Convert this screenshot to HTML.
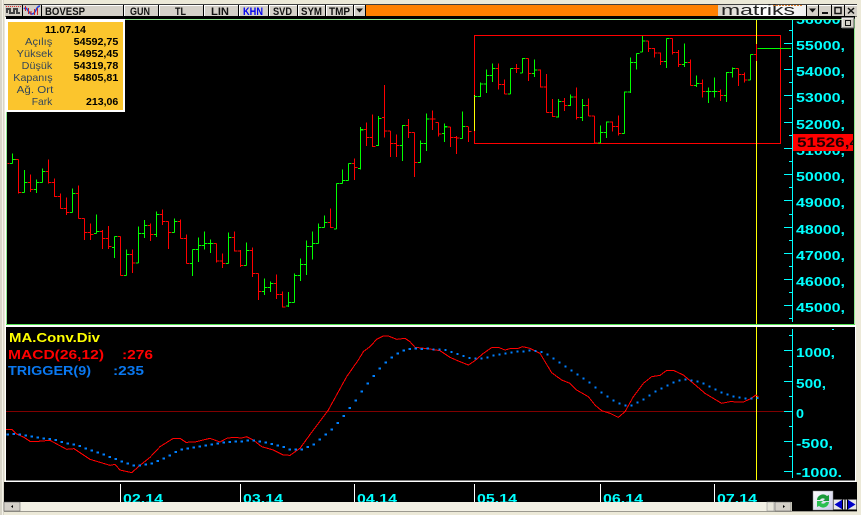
<!DOCTYPE html>
<html><head><meta charset="utf-8"><style>
html,body{margin:0;padding:0;background:#ece9d8;width:861px;height:515px;overflow:hidden}
svg{display:block;position:absolute;left:0;top:0}
text{font-family:"Liberation Sans",sans-serif}
.ax{font:bold 13px "Liberation Sans",sans-serif;fill:#0ff}
.tb{font:bold 11px "Liberation Sans",sans-serif;fill:#111}
.lb{font:10.5px "Liberation Sans",sans-serif;fill:#34465a}
.vl{font:bold 10.5px "Liberation Sans",sans-serif;fill:#000}
.mc{font:bold 13px "Liberation Sans",sans-serif}
</style></head><body>
<svg width="861" height="515" viewBox="0 0 861 515" xmlns="http://www.w3.org/2000/svg">
<defs><clipPath id="top"><rect x="0" y="20" width="861" height="304"/></clipPath>
<clipPath id="rl"><rect x="793" y="134" width="60" height="17"/></clipPath>
<linearGradient id="mg" x1="0" x2="1" y1="0" y2="0"><stop offset="0" stop-color="#d4d0c8"/><stop offset=".5" stop-color="#fff"/><stop offset="1" stop-color="#f0f0f0"/></linearGradient>
<linearGradient id="rg" x1="0" x2="1" y1="0" y2="1"><stop offset="0" stop-color="#fff"/><stop offset="1" stop-color="#c8c8e8"/></linearGradient></defs>
<!-- frame -->
<rect width="861" height="515" fill="#ece9d8"/>
<rect x="0" y="0" width="4" height="515" fill="#d8d5c8"/>
<rect x="2" y="0" width="1" height="515" fill="#f4f2e8"/>
<rect x="4" y="4" width="853" height="1" fill="#404040"/>
<rect x="5" y="16" width="850" height="310" fill="#000"/>
<rect x="5" y="5" width="1" height="321" fill="#fff"/>
<rect x="6" y="19" width="849" height="306" fill="#8fe88f"/>
<rect x="7" y="20" width="847" height="304" fill="#000"/>
<rect x="6" y="324" width="849" height="1" fill="#50e050"/>
<rect x="5" y="325" width="851" height="157" fill="#fff"/>
<rect x="6" y="327" width="849" height="153.500" fill="#000"/>
<rect x="4" y="482" width="853" height="20" fill="#000"/>
<rect x="792" y="502" width="65" height="9" fill="#000"/>
<!-- main axis -->
<g clip-path="url(#top)">
<text class="ax" x="796" y="24" textLength="49" lengthAdjust="spacingAndGlyphs">56000,</text>
<text class="ax" x="796" y="50" textLength="49" lengthAdjust="spacingAndGlyphs">55000,</text>
<text class="ax" x="796" y="76" textLength="49" lengthAdjust="spacingAndGlyphs">54000,</text>
<text class="ax" x="796" y="102" textLength="49" lengthAdjust="spacingAndGlyphs">53000,</text>
<text class="ax" x="796" y="129" textLength="49" lengthAdjust="spacingAndGlyphs">52000,</text>
<text class="ax" x="796" y="155" textLength="49" lengthAdjust="spacingAndGlyphs">51000,</text>
<text class="ax" x="796" y="181" textLength="49" lengthAdjust="spacingAndGlyphs">50000,</text>
<text class="ax" x="796" y="207" textLength="49" lengthAdjust="spacingAndGlyphs">49000,</text>
<text class="ax" x="796" y="234" textLength="49" lengthAdjust="spacingAndGlyphs">48000,</text>
<text class="ax" x="796" y="260" textLength="49" lengthAdjust="spacingAndGlyphs">47000,</text>
<text class="ax" x="796" y="286" textLength="49" lengthAdjust="spacingAndGlyphs">46000,</text>
<text class="ax" x="796" y="312" textLength="49" lengthAdjust="spacingAndGlyphs">45000,</text>
</g>
<path shape-rendering="crispEdges" stroke="#0ff" stroke-width="1" fill="none" d="M792.500 20V322M784 43.500h8M784 69.500h8M784 95.500h8M784 122.500h8M784 148.500h8M784 174.500h8M784 200.500h8M784 227.500h8M784 253.500h8M784 279.500h8M784 305.500h8M789 30.500h3M789 56.500h3M789 82.500h3M789 108.500h3M789 135.500h3M789 161.500h3M789 187.500h3M789 214.500h3M789 240.500h3M789 266.500h3M789 292.500h3M789 318.500h3"/>
<!-- range rect -->
<rect x="474.500" y="35.500" width="306" height="108" fill="none" stroke="#f00" stroke-width="1" shape-rendering="crispEdges"/>
<path d="M474.500 95V131" stroke="#ff0" stroke-width="1" shape-rendering="crispEdges"/>
<path d="M756.500 20V324" stroke="#ff0" stroke-width="1" shape-rendering="crispEdges"/>
<!-- bars part 1 -->
<g transform="translate(.17,120.17) scale(.33333)" fill="none" stroke-width="3.200" shape-rendering="crispEdges">
<path stroke="#f00" d="M22 130h6M55 118V220M46 118h9M55 217h9M91 163V215M84 187h7M91 208h9M145 118V190M138 154h7M145 187h9M163 175V230M156 187h7M163 229h9M181 220V265M174 229h7M181 265h9M199 232V285M192 265h7M199 277h9M235 196V295M228 220h7M235 295h9M253 295V360M246 295h7M253 337h9M271 310V360M264 337h7M271 343h9M307 330V387M300 334h7M307 355h9M325 318V387M318 355h7M325 379h9M361 349V466M354 349h7M361 466h9M397 388V459M390 403h7M397 429h9M451 310V363M444 316h7M451 343h9M487 268V315M480 283h7M487 304h9M505 304V387M498 304h7M505 337h9M541 298V355M534 304h7M541 355h9M559 343V430M552 355h7M559 430h9M649 370V427M642 370h7M649 422h9M667 400V443M660 422h7M667 430h9M703 334V394M696 352h7M703 392h9M721 390V440M714 392h7M721 436h9M757 382V470M750 391h7M757 460h9M775 460V539M768 460h7M775 514h9M829 463V536M822 490h7M829 523h9M847 514V562M840 523h7M847 561h9M991 265V323M984 307h7M991 322h9M1063 115V180M1056 130h7M1063 142h9"/>
<path stroke="#0f0" d="M37 100V130M30 130h7M37 118h9M73 150V217M66 217h7M73 187h9M109 178V218M102 208h7M109 187h9M127 145V187M120 187h7M127 154h9M217 205V277M210 277h7M217 220h9M289 283V340M282 340h7M289 334h9M343 349V414M336 382h7M343 349h9M379 388V466M372 466h7M379 403h9M415 319V429M408 429h7M415 340h9M433 300V354M426 340h7M433 316h9M469 274V350M462 343h7M469 283h9M523 295V337M516 337h7M523 304h9M577 388V467M570 430h7M577 388h9M595 352V425M588 388h7M595 376h9M613 334V388M606 376h7M613 370h9M631 358V398M624 370h7M631 370h9M685 337V430M678 430h7M685 352h9M739 367V436M732 436h7M739 391h9M793 475V524M786 514h7M793 502h9M811 484V515M804 502h7M811 490h9M865 516V560M858 558h7M865 547h9M883 460V547M876 547h7M883 466h9M901 415V482M894 466h7M901 433h9M919 361V464M912 433h7M919 379h9M937 334V418M930 379h7M937 370h9M955 310V370M948 370h7M955 322h9M973 286V322M966 322h7M973 307h9M1009 190V326M1002 326h7M1009 190h9M1027 148V190M1020 190h7M1027 181h9M1045 130V181M1038 181h7M1045 130h9M1081 22V148M1074 145h7M1081 28h9"/>
</g>
<!-- bars part 2 -->
<g transform="translate(360.17,75.17) scale(.33333)" fill="none" stroke-width="3.200" shape-rendering="crispEdges">
<path stroke="#f00" d="M19 142V212M12 163h7M19 187h9M37 118V215M30 187h7M37 214h9M73 30V187M66 127h7M73 168h9M91 168V245M84 168h7M91 205h9M109 178V245M102 205h7M109 211h9M145 132V188M138 151h7M145 172h9M163 172V305M156 172h7M163 262h9M217 106V164M210 132h7M217 132h9M235 142V184M226 142h9M235 177h9"/>
<path stroke="#0f0" d="M1 155V282M1 165h9M55 123V212M48 211h7M55 130h9M127 150V257M120 211h7M127 151h9M181 196V262M174 262h7M181 205h9M199 115V227M192 205h7M199 132h9M253 145V200M246 175h7M253 154h9"/>
</g>
<!-- bars part 3 -->
<g transform="translate(430.17,.17) scale(.33333)" fill="none" stroke-width="3.200" shape-rendering="crispEdges">
<path stroke="#f00" d="M61 380V440M54 380h7M61 412h9M79 408V462M72 412h7M79 414h9M115 380V425M108 379h7M115 394h9M205 190V268M198 205h7M205 253h9M223 238V282M216 253h7M223 281h9M259 192V218M252 205h7M259 205h9M295 175V243M288 175h7M295 220h9M331 208V262M324 210h7M331 260h9M349 222V337M342 260h7M349 337h9M367 297V350M360 337h7M367 349h9M403 293V333M396 304h7M403 316h9M439 262V358M432 290h7M439 352h9M475 295V347M468 316h7M475 347h9M493 347V428M486 347h7M493 428h9M547 364V394M540 365h7M547 379h9M565 346V406M558 379h7M565 400h9M655 122V155M648 122h7M655 145h9M673 143V172M666 145h7M673 158h9M691 157V195M684 158h7M691 184h9M727 115V163M720 115h7M727 157h9M745 150V200M738 157h7M745 193h9M781 178V256M774 187h7M781 256h9M817 238V292M810 250h7M817 274h9M871 268V303M864 274h7M871 286h9M925 205V257M918 205h7M925 223h9M943 217V247M936 223h7M943 240h9M979 132V183M972 163h7"/>
<path stroke="#0f0" d="M43 370V425M36 400h7M43 380h9M97 334V415M90 415h7M97 379h9M133 289h9M151 247V290M144 289h7M151 252h9M169 208V278M162 252h7M169 226h9M187 190V245M180 226h7M187 205h9M241 205V281M234 281h7M241 205h9M277 173V218M270 218h7M277 175h9M313 178V230M306 220h7M313 210h9M385 297V352M378 350h7M385 304h9M421 283V318M414 316h7M421 290h9M457 297V362M450 352h7M457 316h9M511 376V428M504 428h7M511 397h9M529 364V414M522 397h7M529 365h9M583 274V400M576 400h7M583 276h9M601 172V278M594 276h7M601 187h9M619 160V208M612 187h7M619 160h9M637 108V155M630 155h7M637 122h9M709 115V203M702 184h7M709 115h9M763 130V200M756 193h7M763 187h9M799 226V260M792 256h7M799 250h9M835 262V308M828 274h7M835 274h9M853 232V292M846 274h7M853 274h9M889 216V305M882 286h7M889 217h9M907 202V232M900 217h7M907 205h9M961 163V239M954 239h7M961 163h9M982 145H1082"/>
</g>
<!-- red price -->
<rect x="793" y="134" width="60" height="17" fill="#f00"/>
<g clip-path="url(#rl)"><text x="797" y="147" class="ax" style="fill:#200000;font-size:14px" textLength="62" lengthAdjust="spacingAndGlyphs">51526,4</text></g>
<!-- lower panel -->
<path d="M6 411.500H792" stroke="#800000" stroke-width="1" shape-rendering="crispEdges"/>
<path d="M756.500 327V480" stroke="#ff0" stroke-width="1" shape-rendering="crispEdges"/>
<path shape-rendering="crispEdges" stroke="#0ff" stroke-width="1" fill="none" d="M792.500 329V478M784 350.500h8M784 381.500h8M784 411.500h8M784 441.500h8M784 471.500h8M789 335.500h3M789 366.500h3M789 396.500h3M789 426.500h3M789 456.500h3M832 329.500h2"/>
<text class="ax" x="796" y="357" textLength="39" lengthAdjust="spacingAndGlyphs">1000,</text>
<text class="ax" x="796" y="388" textLength="30" lengthAdjust="spacingAndGlyphs">500,</text>
<text class="ax" x="796" y="418" textLength="8" lengthAdjust="spacingAndGlyphs">0</text>
<text class="ax" x="796" y="448" textLength="37" lengthAdjust="spacingAndGlyphs">-500,</text>
<text class="ax" x="796" y="477" textLength="46" lengthAdjust="spacingAndGlyphs">-1000.</text>
<text class="mc" x="9" y="342" textLength="91" lengthAdjust="spacingAndGlyphs" fill="#ff0">MA.Conv.Div</text>
<text class="mc" x="8" y="359" textLength="96" lengthAdjust="spacingAndGlyphs" fill="#f00">MACD(26,12)</text>
<text class="mc" x="122" y="359" textLength="31" lengthAdjust="spacingAndGlyphs" fill="#f00">:276</text>
<text class="mc" x="8" y="375" textLength="83" lengthAdjust="spacingAndGlyphs" fill="#0a78f0">TRIGGER(9)</text>
<text class="mc" x="113" y="375" textLength="31" lengthAdjust="spacingAndGlyphs" fill="#0a78f0">:235</text>
<g transform="translate(0,320) scale(.33333)" fill="none" shape-rendering="crispEdges">
<path stroke="#f00" stroke-width="3" d="M18 328L36 328L50 342L72 352L90 364L115 364L150 361L170 372L200 388L222 386L240 398L270 418L310 430L330 436L345 433L360 450L395 458L420 436L450 412L480 380L520 355L540 355L558 367L585 366L630 355L660 366L680 355L700 352L725 354L740 350L760 360L785 380L820 390L850 405L870 406L900 385L940 330L985 270L1040 170L1075 120L1090 95L1110 80L1130 58L1150 48L1165 48L1190 58L1215 55L1230 65L1245 82L1290 87"/>
<path stroke="#0080ff" stroke-width="6.300" d="M20 343h6.300M38 342h6.300M56 344h6.300M74 347h6.300M92 349h6.300M110 352h6.300M128 355h6.300M146 357h6.300M164 360h6.300M182 366h6.300M200 371h6.300M218 374h6.300M236 378h6.300M254 385h6.300M272 392h6.300M290 398h6.300M308 404h6.300M326 411h6.300M344 417h6.300M362 424h6.300M380 430h6.300M398 436h6.300M416 437h6.300M434 434h6.300M452 430h6.300M470 423h6.300M488 416h6.300M506 406h6.300M524 396h6.300M542 388h6.300M560 385h6.300M578 383h6.300M596 380h6.300M614 377h6.300M632 374h6.300M650 370h6.300M668 368h6.300M686 366h6.300M704 365h6.300M722 364h6.300M740 361h6.300M758 361h6.300M776 365h6.300M794 368h6.300M812 372h6.300M830 376h6.300M848 381h6.300M866 388h6.300M884 389h6.300M902 388h6.300M920 381h6.300M938 373h6.300M956 359h6.300M974 343h6.300M992 328h6.300M1010 309h6.300M1028 288h6.300M1046 264h6.300M1064 241h6.300M1082 214h6.300M1100 190h6.300M1118 168h6.300M1136 146h6.300M1154 127h6.300M1172 113h6.300M1190 100h6.300M1208 91h6.300M1226 87h6.300M1244 85h6.300M1262 87h6.300M1280 86h6.300"/>
</g>
<g transform="translate(430,320) scale(.33333)" fill="none" shape-rendering="crispEdges">
<path stroke="#f00" stroke-width="3" d="M0 87L30 92L60 112L85 123L115 135L135 122L160 100L185 83L205 82L225 90L240 86L262 86L278 80L300 85L330 100L345 125L365 158L395 180L420 190L440 210L475 230L495 255L515 272L540 280L565 292L585 275L610 230L640 190L665 170L690 166L710 151L730 151L760 165L790 190L825 220L850 235L875 250L900 245L940 246L960 237L978 225L985 230"/>
<path stroke="#0080ff" stroke-width="6.300" d="M7 88h6.300M25 89h6.300M43 90h6.300M61 96h6.300M79 102h6.300M97 108h6.300M115 114h6.300M133 115h6.300M151 115h6.300M169 112h6.300M187 106h6.300M205 103h6.300M223 100h6.300M241 97h6.300M259 95h6.300M277 94h6.300M295 92h6.300M313 93h6.300M331 96h6.300M349 103h6.300M367 115h6.300M385 127h6.300M403 139h6.300M421 151h6.300M439 163h6.300M457 175h6.300M475 187h6.300M493 202h6.300M511 217h6.300M529 229h6.300M547 241h6.300M565 250h6.300M583 256h6.300M601 256h6.300M619 248h6.300M637 239h6.300M655 226h6.300M673 214h6.300M691 205h6.300M709 196h6.300M727 187h6.300M745 181h6.300M763 179h6.300M781 182h6.300M799 185h6.300M817 190h6.300M835 199h6.300M853 208h6.300M871 217h6.300M889 223h6.300M907 229h6.300M925 232h6.300M943 235h6.300M961 236h6.300M979 234h6.300"/>
</g>
<!-- date axis -->
<path shape-rendering="crispEdges" stroke="#fff" stroke-width="1" d="M120.500 484V502M240.500 484V502M354.500 484V502M474.500 484V502M600.500 484V502M714.500 484V502"/>
<text class="ax" x="123" y="503" textLength="40" lengthAdjust="spacingAndGlyphs">02.14</text>
<text class="ax" x="243" y="503" textLength="40" lengthAdjust="spacingAndGlyphs">03.14</text>
<text class="ax" x="357" y="503" textLength="40" lengthAdjust="spacingAndGlyphs">04.14</text>
<text class="ax" x="477" y="503" textLength="40" lengthAdjust="spacingAndGlyphs">05.14</text>
<text class="ax" x="603" y="503" textLength="40" lengthAdjust="spacingAndGlyphs">06.14</text>
<text class="ax" x="717" y="503" textLength="40" lengthAdjust="spacingAndGlyphs">07.14</text>
<!-- scrollbar -->
<rect x="4" y="502" width="787" height="9" fill="#f2f0e4"/>
<rect x="4" y="511" width="853" height="1" fill="#9c9a90"/>
<rect x="4" y="502" width="16" height="9" fill="#d4d0c8" stroke="#555" stroke-width=".5"/>
<path d="M13 505v3l-2-1.500z" fill="#000"/>
<rect x="767" y="502" width="7" height="9" fill="#e8e6da" stroke="#888" stroke-width=".5"/>
<rect x="775" y="502" width="16" height="9" fill="#d4d0c8" stroke="#555" stroke-width=".5"/>
<path d="M783 505v3l2-1.500z" fill="#000"/>
<!-- refresh -->
<rect x="813" y="491" width="20" height="19" fill="url(#rg)" stroke="#888" stroke-width=".5"/>
<path d="M817 500a6 6 0 0 1 10-4l2-1v6h-6l2-2a3.500 3.500 0 0 0-5 1z" fill="#1a9a3a"/>
<path d="M829 502a6 6 0 0 1-10 4l-2 1v-6h6l-2 2a3.500 3.500 0 0 0 5-1z" fill="#2abf50"/>
<rect x="833.500" y="499.500" width="11" height="10" fill="#e8e8e8" stroke="#666" stroke-width=".5"/>
<path d="M834.500 504.500l8-5v10z" fill="#0000c8"/><path d="M842.500 499.500v10" stroke="#000" stroke-width="1"/>
<rect x="845.500" y="499.500" width="11" height="10" fill="#e8e8e8" stroke="#666" stroke-width=".5"/>
<path d="M855.500 504.500l-8-5v10z" fill="#0000c8"/><path d="M847.500 499.500v10" stroke="#000" stroke-width="1"/>
<!-- toolbar -->
<rect x="5" y="5" width="852" height="11.500" fill="#000"/>
<g fill="#d4d0c8" stroke-width="1" shape-rendering="crispEdges">
<rect x="42" y="5" width="81" height="11"/><rect x="124" y="5" width="34" height="11"/><rect x="159" y="5" width="44" height="11"/><rect x="204" y="5" width="34" height="11"/><rect x="239" y="5" width="29" height="11"/><rect x="269" y="5" width="28" height="11"/><rect x="298" y="5" width="27" height="11"/><rect x="326" y="5" width="27" height="11"/><rect x="354" y="5" width="11" height="11"/>
<rect x="807" y="5" width="11" height="11"/><rect x="819" y="5" width="12" height="11"/><rect x="832" y="5" width="12" height="11"/><rect x="845" y="5" width="12" height="11"/>
<rect x="5" y="5" width="17" height="11"/><rect x="23" y="5" width="18" height="11"/>
</g>
<path shape-rendering="crispEdges" stroke="#fff" stroke-width="1" fill="none" d="M42 5.500h81M124 5.500h34M159 5.500h44M204 5.500h34M239 5.500h29M269 5.500h28M298 5.500h27M326 5.500h27M354 5.500h11M807 5.500h11M819 5.500h12M832 5.500h12M845 5.500h12M124.500 5v11M159.500 5v11M204.500 5v11M239.500 5v11M269.500 5v11M298.500 5v11M326.500 5v11M354.500 5v11"/>
<rect x="366" y="5" width="352" height="11" fill="#ff8000"/>
<rect x="718" y="5" width="88" height="11" fill="url(#mg)"/>
<text x="721" y="15" font-size="15" fill="#222" textLength="74" lengthAdjust="spacingAndGlyphs">matriks</text>
<path d="M773 5.500h30" stroke="#e08030" stroke-width="1" stroke-dasharray="2 1" shape-rendering="crispEdges"/>
<!-- icons -->
<path shape-rendering="crispEdges" fill="none" stroke="#444" stroke-width="2" d="M7 13V9h3v4h4V9h3v4h3"/>
<path shape-rendering="crispEdges" stroke="#e03030" stroke-width="1" stroke-dasharray="1 1" d="M6 6.500h15"/>
<path fill="none" stroke="#2040e0" stroke-width="1.500" d="M24 9c3-4 4 5 8 5s4-8 8-8"/>
<path stroke="#d02020" stroke-width="1" d="M25.500 6v5M28.500 8v6M34.500 9v6M37.500 8v7M31 11v4"/>
<text class="tb" x="45" y="15" textLength="40" lengthAdjust="spacingAndGlyphs">BOVESP</text>
<text class="tb" x="130" y="15" textLength="20" lengthAdjust="spacingAndGlyphs">GUN</text>
<text class="tb" x="175" y="15" textLength="11" lengthAdjust="spacingAndGlyphs">TL</text>
<text class="tb" x="211" y="15" textLength="18" lengthAdjust="spacingAndGlyphs">LIN</text>
<text class="tb" x="243" y="15" textLength="20" lengthAdjust="spacingAndGlyphs" style="fill:#0000f0">KHN</text>
<text class="tb" x="273" y="15" textLength="19" lengthAdjust="spacingAndGlyphs">SVD</text>
<text class="tb" x="301" y="15" textLength="21" lengthAdjust="spacingAndGlyphs">SYM</text>
<text class="tb" x="329" y="15" textLength="21" lengthAdjust="spacingAndGlyphs">TMP</text>
<path d="M356 8.500h7l-3.500 4z" fill="#111"/>
<path d="M809 8.500h7l-3.500 4z" fill="#111"/>
<rect x="822" y="12" width="6" height="2" fill="#111"/>
<rect x="835" y="7.500" width="6" height="6" fill="none" stroke="#111" stroke-width="1.500"/>
<path d="M848 8l6 5.500M854 8l-6 5.500" stroke="#111" stroke-width="1.500"/>
<!-- small restore -->
<rect x="842" y="18" width="12" height="10" fill="#d4d0c8"/>
<path d="M842 28V18h12" stroke="#fff" fill="none"/><path d="M854 18v10h-12" stroke="#555" fill="none"/>
<rect x="845.500" y="20.500" width="5" height="5" fill="none" stroke="#111" stroke-width="1"/>
<!-- info box -->
<rect x="5" y="19" width="120" height="93" fill="#fff"/>
<rect x="8" y="22" width="115" height="88" fill="#fbc52d"/>
<text class="vl" x="45" y="33" textLength="41" lengthAdjust="spacingAndGlyphs">11.07.14</text>
<text class="lb" x="25" y="45" textLength="27.300" lengthAdjust="spacingAndGlyphs">Açılış</text>
<text class="lb" x="16.700" y="57" textLength="36" lengthAdjust="spacingAndGlyphs">Yüksek</text>
<text class="lb" x="21.700" y="69" textLength="30.600" lengthAdjust="spacingAndGlyphs">Düşük</text>
<text class="lb" x="13.300" y="81" textLength="39.300" lengthAdjust="spacingAndGlyphs">Kapanış</text>
<text class="lb" x="16.700" y="93" textLength="36.600" lengthAdjust="spacingAndGlyphs">Ağ. Ort</text>
<text class="lb" x="31.700" y="105" textLength="20.600" lengthAdjust="spacingAndGlyphs">Fark</text>
<text class="vl" x="73.700" y="45" textLength="44.600" lengthAdjust="spacingAndGlyphs">54592,75</text>
<text class="vl" x="73.700" y="57" textLength="44.600" lengthAdjust="spacingAndGlyphs">54952,45</text>
<text class="vl" x="73.700" y="69" textLength="44.600" lengthAdjust="spacingAndGlyphs">54319,78</text>
<text class="vl" x="73.700" y="81" textLength="44.600" lengthAdjust="spacingAndGlyphs">54805,81</text>
<text class="vl" x="86" y="105" textLength="32.300" lengthAdjust="spacingAndGlyphs">213,06</text>
</svg>
</body></html>
